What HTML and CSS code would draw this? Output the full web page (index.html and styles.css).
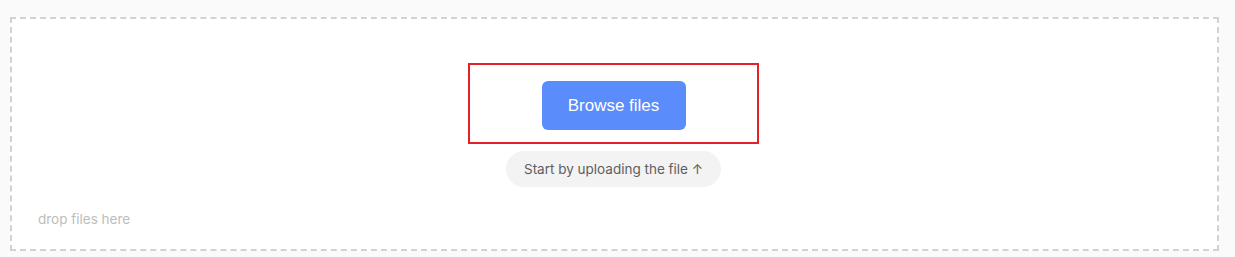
FILE: index.html
```html
<!DOCTYPE html>
<html lang="en">
<head>
<meta charset="utf-8">
<title>Upload</title>
<link rel="stylesheet" href="styles.css">
</head>
<body>
  <div class="dropzone">
    <div class="center">
      <div class="highlight">
        <button class="browse" type="button">Browse files</button>
      </div>
      <div class="hint">Start by uploading the file ↑</div>
    </div>
    <div class="drop-label">drop files here</div>
  </div>
</body>
</html>
```

FILE: styles.css
```css
html, body {
  margin: 0;
  padding: 0;
  background: #fafafa;
  font-family: Inter, "Liberation Sans", Arial, sans-serif;
}

.dropzone {
  box-sizing: border-box;
  margin: 17px 16px 0 10px;
  height: 234px;
  background: #ffffff;
  border: 2px dashed #d2d2d2;
  display: flex;
  flex-direction: column;
  padding: 44px 0 0 0;
}

.center {
  display: flex;
  flex-direction: column;
  align-items: center;
  padding-right: 2px;
}

.highlight {
  box-sizing: border-box;
  width: 291px;
  height: 81px;
  border: 2px solid #e3212b;
  display: flex;
  justify-content: center;
  padding-top: 16px;
}

.browse {
  width: 144px;
  height: 49px;
  border: none;
  border-radius: 6px;
  background: #5b8cfb;
  color: #ffffff;
  font-family: "Liberation Sans", Arial, sans-serif;
  font-size: 17px;
  padding: 0;
  cursor: pointer;
}

.hint {
  margin-top: 7px;
  height: 36px;
  padding: 0 18px;
  border-radius: 18px;
  background: #f3f3f3;
  color: #5e5e5e;
  font-size: 13.5px;
  display: flex;
  align-items: center;
}

.drop-label {
  margin: 24px 0 0 26px;
  color: #bdbdbd;
  font-size: 13.5px;
}
```
